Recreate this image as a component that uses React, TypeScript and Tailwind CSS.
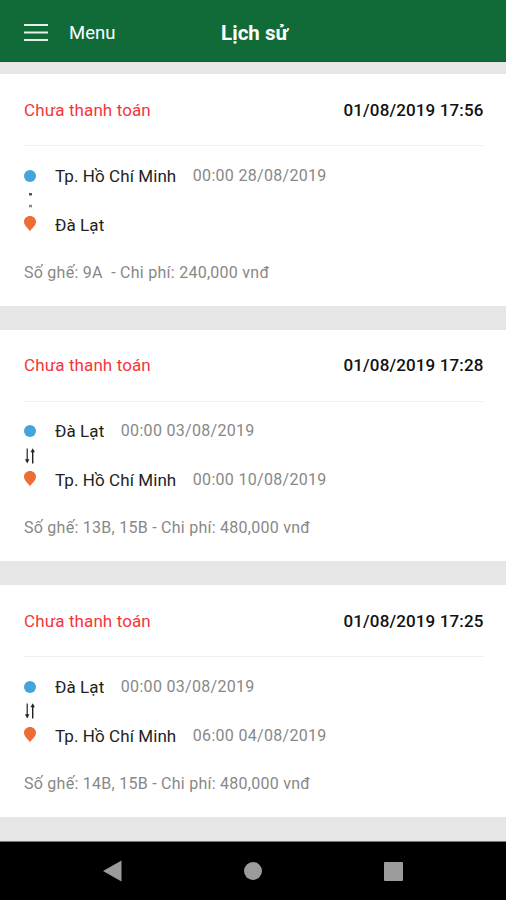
import React from "react";

// Define types for the stops and tickets
interface Stop {
  name: string;
  time?: string;
}

interface Ticket {
  status: string;
  createdAt: string;
  from: Stop;
  to: Stop;
  roundTrip: boolean;
  summary: string;
}

const tickets: Ticket[] = [
  {
    status: "Chưa thanh toán",
    createdAt: "01/08/2019 17:56",
    from: { name: "Tp. Hồ Chí Minh", time: "00:00 28/08/2019" },
    to: { name: "Đà Lạt" },
    roundTrip: false,
    summary: "Số ghế: 9A  - Chi phí: 240,000 vnđ",
  },
  {
    status: "Chưa thanh toán",
    createdAt: "01/08/2019 17:28",
    from: { name: "Đà Lạt", time: "00:00 03/08/2019" },
    to: { name: "Tp. Hồ Chí Minh", time: "00:00 10/08/2019" },
    roundTrip: true,
    summary: "Số ghế: 13B, 15B - Chi phí: 480,000 vnđ",
  },
  {
    status: "Chưa thanh toán",
    createdAt: "01/08/2019 17:25",
    from: { name: "Đà Lạt", time: "00:00 03/08/2019" },
    to: { name: "Tp. Hồ Chí Minh", time: "06:00 04/08/2019" },
    roundTrip: true,
    summary: "Số ghế: 14B, 15B - Chi phí: 480,000 vnđ",
  },
];

const PinIcon = () => (
  <svg className="-mt-0.5" width="12" height="16" viewBox="0 0 12 16" fill="#ec6e35">
    <path d="M6 0C2.6 0 0 2.5 0 5.8C0 9.4 3.6 12 6 15.2C8.4 12 12 9.4 12 5.8C12 2.5 9.4 0 6 0Z" />
  </svg>
);

const DotsIcon = () => (
  <svg width="12" height="16" viewBox="0 0 12 16" fill="#555">
    <rect x="5" y="1" width="3" height="2.5" />
    <rect x="5" y="12.8" width="3" height="2.5" fill="#888" />
  </svg>
);

const RoundTripIcon = () => (
  <svg width="12" height="16" viewBox="0 0 12 16" fill="#222">
    <rect x="2.6" y="0.5" width="1.2" height="12" />
    <path d="M1 11.3H5.4L3.2 15.5Z" />
    <rect x="8" y="3.5" width="1.4" height="12" />
    <path d="M6.5 4.3H10.9L8.7 0.3Z" />
  </svg>
);

// One line of the route: marker, place and departure time
const StopRow = ({ stop, icon }: { stop: Stop; icon: React.ReactNode }) => (
  <div className="flex h-6 items-center">
    <div className="flex w-[31px] items-center">{icon}</div>
    <span className="pt-0.5 text-[17px] tracking-[0.08px] text-[#222]">{stop.name}</span>
    {stop.time && (
      <span className="ml-[16.5px] text-base tracking-[0.3px] text-[#888]">{stop.time}</span>
    )}
  </div>
);

function TicketCard({ ticket }: { ticket: Ticket }) {
  return (
    <div className="h-[231.5px] bg-white pr-[22.5px] pl-6">
      {/* Header Section */}
      <div className="flex h-[72px] items-center justify-between border-b border-[#efefef] pt-0.5 text-[17px]">
        <span className="tracking-[0.1px] text-[#f5353b]">{ticket.status}</span>
        <span className="font-medium tracking-[0.13px] text-[#111]">{ticket.createdAt}</span>
      </div>

      {/* Route Section */}
      <div className="pt-[17.5px]">
        <StopRow
          stop={ticket.from}
          icon={<div className="size-3 rounded-full bg-[#43a5dc]" />}
        />
        <div className="flex h-[25px] items-center">
          {ticket.roundTrip ? <RoundTripIcon /> : <DotsIcon />}
        </div>
        <StopRow stop={ticket.to} icon={<PinIcon />} />
      </div>

      <div className="mt-6 text-base leading-6 tracking-[0.26px] whitespace-pre text-[#888]">
        {ticket.summary}
      </div>
    </div>
  );
}

export default function App() {
  return (
    <div className="flex h-[900px] w-[506px] flex-col overflow-hidden bg-[#e6e6e6] font-['Roboto',sans-serif]">
      {/* App Bar */}
      <header className="grid h-[62px] shrink-0 grid-cols-3 items-center border-b border-[#0c5c2e] bg-[#106b38] px-6 pt-[4px] text-white">
        <div className="flex items-center">
          <svg width="24" height="18" viewBox="0 0 24 18" fill="#e3efe8">
            <rect y="0" width="24" height="2" />
            <rect y="7.5" width="24" height="2" />
            <rect y="15" width="24" height="2" />
          </svg>
          <span className="ml-[21px] pt-0.5 text-[18.5px]">Menu</span>
        </div>
        <h1 className="pl-[3px] text-center text-[20.5px] leading-7 font-bold">Lịch sử</h1>
      </header>

      {/* Ticket List */}
      <main className="flex flex-1 flex-col gap-6 pt-3">
        {tickets.map((ticket) => (
          <TicketCard key={ticket.createdAt} ticket={ticket} />
        ))}
      </main>

      {/* Navigation Bar */}
      <nav className="flex h-[59px] shrink-0 items-center justify-between border-t border-[#777] bg-black pr-[103px] pl-[102px]">
        <svg width="20" height="22" viewBox="0 0 20 22" fill="#9b9b9b">
          <path d="M1 11L19.5 0.5V21.5Z" />
        </svg>
        <div className="size-[18px] rounded-full bg-[#9b9b9b]" />
        <div className="size-[19px] rounded-[1px] bg-[#9b9b9b]" />
      </nav>
    </div>
  );
}
